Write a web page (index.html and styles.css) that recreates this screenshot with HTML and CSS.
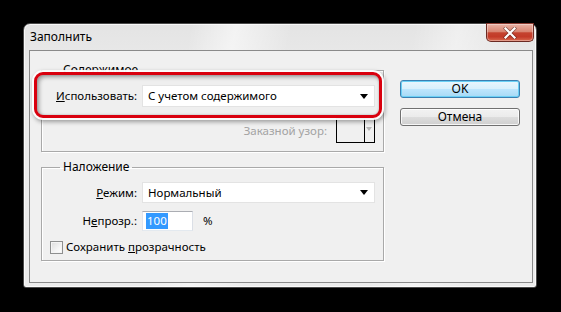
FILE: index.html
```html
<!DOCTYPE html>
<html lang="ru">
<head>
<meta charset="utf-8">
<title>Заполнить</title>
<link rel="stylesheet" href="styles.css">
</head>
<body>
<div class="stage">
  <div class="window">
    <div class="titlebar">
      <span class="title">Заполнить</span>
      <div class="close" aria-label="Закрыть">
        <svg width="14" height="12" viewBox="0 0 14 12"><path d="M2.5 1.5 L11.5 10.5 M11.5 1.5 L2.5 10.5" stroke="#4a1d18" stroke-width="3.6" stroke-linecap="square" opacity="0.55"/><path d="M2.5 1.5 L11.5 10.5 M11.5 1.5 L2.5 10.5" stroke="#fff" stroke-width="2.2" stroke-linecap="square"/></svg>
      </div>
    </div>
    <div class="client">
      <div class="highlight"></div>
      <div class="left">
        <fieldset class="group g1">
          <legend>Содержимое</legend>
          <div class="row r-use">
            <span class="label"><u>И</u>спользовать:</span>
            <div class="combo"><span>С учетом содержимого</span><i class="arrow"></i></div>
          </div>
          <div class="row r-pattern">
            <span class="label disabled">Заказной узор:</span>
            <div class="pattern"><span class="swatch"></span><span class="pbtn"><i class="arrow grey"></i></span></div>
          </div>
        </fieldset>
        <fieldset class="group g2">
          <legend>Наложение</legend>
          <div class="row r-mode">
            <span class="label"><u>Р</u>ежим:</span>
            <div class="combo"><span>Нормальный</span><i class="arrow"></i></div>
          </div>
          <div class="row r-opacity">
            <span class="label">Н<u>е</u>прозр.:</span>
            <div class="textbox"><span class="sel">100</span></div>
            <span class="pct">%</span>
          </div>
          <div class="row r-check">
            <span class="checkbox"></span>
            <span class="ctext">Сохранить <u>п</u>розрачность</span>
          </div>
        </fieldset>
      </div>
      <div class="right">
        <div class="btn ok">OK</div>
        <div class="btn">Отмена</div>
      </div>
    </div>
  </div>
</div>
</body>
</html>
```
FILE: styles.css
```css
html, body {
  margin: 0;
  padding: 0;
  background: #000;
}
body {
  font-family: "Noto Sans", "Open Sans", "DejaVu Sans", sans-serif;
  font-size: 11.5px;
  line-height: 16px;
  color: #000;
}
.stage {
  padding: 23px 0 0 23px;
}
.window {
  width: 514px;
  height: 265px;
  box-sizing: border-box;
  border: 1px solid #4a4a4a;
  border-radius: 7px 7px 3px 3px;
  background:
    linear-gradient(100deg, rgba(255,255,255,0) 30%, rgba(255,255,255,0.55) 38%, rgba(255,255,255,0) 48%, rgba(255,255,255,0) 70%, rgba(255,255,255,0.4) 78%, rgba(255,255,255,0) 88%),
    linear-gradient(180deg, #e4e4e4 0%, #ebebeb 20%, #ececec 100%);
  box-shadow: inset 0 0 0 1px rgba(255,255,255,0.75);
  padding: 0 3px 4px 5px;
  display: flex;
  flex-direction: column;
}
.titlebar {
  height: 26px;
  display: flex;
  align-items: flex-start;
}
.title {
  margin: 5px 0 0 1px;
  color: #000;
  font-size: 12px;
}
.close {
  margin: -1px -1px 0 auto;
  width: 48px;
  height: 19px;
  box-sizing: border-box;
  border: 1px solid #6b2a22;
  border-top-color: #8a3a30;
  border-radius: 0 0 5px 5px;
  background: linear-gradient(180deg, #eab3a6 0%, #d98572 45%, #c4432f 52%, #c33a28 75%, #d86a4f 100%);
  box-shadow: inset 0 0 0 1px rgba(255,255,255,0.35);
  display: flex;
  align-items: center;
  justify-content: center;
}
.close svg { display: block; }
.client {
  position: relative;
  flex: 1;
  border: 1px solid #8a8a8a;
  background: #f0f0f0;
  display: flex;
  padding: 11px 0 0 11px;
}
.left {
  width: 343px;
  display: flex;
  flex-direction: column;
  gap: 7px;
}
.group {
  margin: 0;
  padding: 0 8px 0 0;
  border: 1px solid #a9a9a9;
  box-shadow: 1px 1px 0 #fff, inset 1px 1px 0 #fff;
  min-width: 0;
}
.group legend {
  margin-left: 18px;
  padding: 0 3px;
  line-height: 16px;
  font-size: 12px;
}
.g1 { padding-bottom: 8px; }
.g2 { padding-bottom: 5px; }
.row {
  display: flex;
  align-items: center;
}
.label {
  width: 95px;
  text-align: right;
  margin-right: 5px;
  white-space: nowrap;
}
.label.disabled { color: #a3a3a3; width: auto; margin-right: 9px; }
.r-use {
  position: relative;
  z-index: 2;
  margin-top: 7px;
}
.r-pattern {
  margin-top: 11px;
  justify-content: flex-end;
}
.r-mode { margin-top: 7px; }
.r-opacity { margin-top: 8px; }
.r-check { margin-top: 8px; padding-left: 8px; height: 16px; }
.combo {
  width: 233px;
  height: 22px;
  box-sizing: border-box;
  background: #fff;
  border: 1px solid #e3e3e3;
  display: flex;
  align-items: center;
  padding: 0 5px 0 5px;
}
.r-mode .combo { height: 21px; }
.combo span { flex: 1; }
.arrow {
  display: block;
  width: 0;
  height: 0;
  border-left: 4px solid transparent;
  border-right: 4px solid transparent;
  border-top: 5px solid #000;
  margin-right: 1px;
}
.arrow.grey { border-top-color: #b5b5b5; border-left-width: 3px; border-right-width: 3px; border-top-width: 4px; }
.pattern {
  width: 39px;
  height: 25px;
  box-sizing: border-box;
  border: 1px solid #000;
  display: flex;
}
.swatch { width: 27px; border-right: 1px solid #000; }
.pbtn { flex: 1; display: flex; justify-content: center; padding-top: 8px; }
.textbox {
  width: 51px;
  height: 20px;
  box-sizing: border-box;
  background: #fff;
  border: 1px solid;
  border-color: #abadb3 #dbdfe6 #e3e9ef #e2e3ea;
  padding: 1px 0 1px 3px;
  display: flex;
}
.sel {
  background: #3399ff;
  color: #fff;
  padding: 0 1px;
  line-height: 16px;
}
.pct { margin-left: 10px; }
.checkbox {
  width: 13px;
  height: 13px;
  box-sizing: border-box;
  border: 1px solid #8e8f8f;
  background: linear-gradient(135deg, #dcdcdc 0%, #f4f4f4 60%, #ffffff 100%);
  box-shadow: inset 0 0 0 1px #f4f4f4;
  margin-right: 3px;
}
.right {
  margin-left: 16px;
  padding-top: 18px;
  display: flex;
  flex-direction: column;
  gap: 10px;
}
.btn {
  width: 120px;
  height: 18px;
  box-sizing: border-box;
  border: 1px solid #707070;
  border-radius: 3px;
  background: linear-gradient(180deg, #f2f2f2 0%, #ebebeb 50%, #dddddd 51%, #cfcfcf 100%);
  box-shadow: inset 0 0 0 1px rgba(255,255,255,0.8);
  display: flex;
  align-items: center;
  justify-content: center;
  line-height: 14px;
  font-size: 12px;
}
.btn.ok {
  border-color: #3c7fb1;
  background: linear-gradient(180deg, #eaf6fd 0%, #d9f0fc 50%, #bee6fd 51%, #a7d9f5 100%);
  box-shadow: inset 0 0 0 1px #6bd0f5;
}
.highlight {
  position: absolute;
  left: 4px;
  top: 21px;
  width: 348px;
  height: 46px;
  box-sizing: border-box;
  z-index: 1;
  border: 3px solid #d9000e;
  border-radius: 9px;
  background: #efefef;
  box-shadow:
    0 0 0 2px rgba(255,255,255,0.95),
    1px 2px 4px 2px rgba(0,0,0,0.35),
    inset 2px 2px 4px rgba(0,0,0,0.35),
    inset 0 0 2px rgba(0,0,0,0.2);
}
```
